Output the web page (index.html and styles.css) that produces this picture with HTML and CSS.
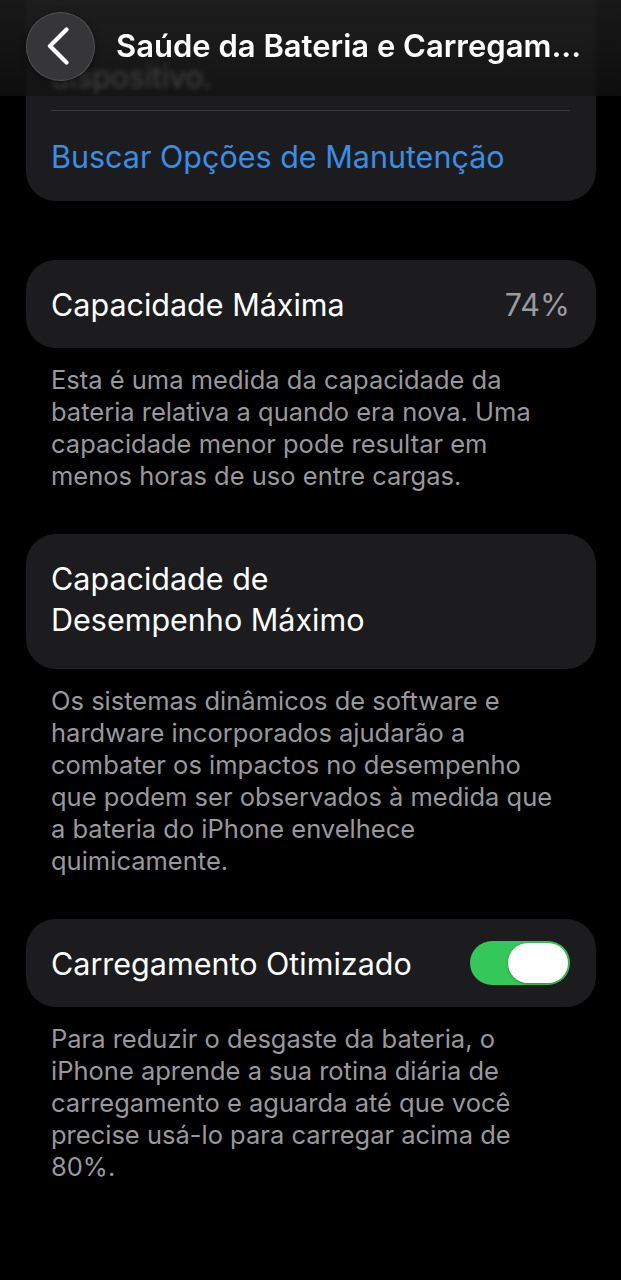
FILE: index.html
```html
<!DOCTYPE html>
<html lang="pt-BR">
<head>
<meta charset="utf-8">
<title>Saúde da Bateria e Carregamento</title>
<link rel="stylesheet" href="styles.css">
</head>
<body>
<div class="screen">
  <header class="navbar">
    <button class="back" aria-label="Voltar">
      <svg width="24" height="38" viewBox="0 0 24 38" fill="none">
        <path d="M20.5 2.5 L4 19 L20.5 35.5" stroke="#ffffff" stroke-width="4.2" stroke-linecap="round" stroke-linejoin="round"/>
      </svg>
    </button>
    <h1 class="title">Saúde da Bateria e Carregam...</h1>
  </header>

  <main class="content">
    <section class="card card-top">
      <p class="card-note">dispositivo.</p>
      <div class="link-row"><span class="link">Buscar Opções de Manutenção</span></div>
    </section>

    <section class="group group-first">
      <div class="card row">
        <span class="label">Capacidade Máxima</span>
        <span class="value">74%</span>
      </div>
      <p class="footer">Esta é uma medida da capacidade da<br>bateria relativa a quando era nova. Uma<br>capacidade menor pode resultar em<br>menos horas de uso entre cargas.</p>
    </section>

    <section class="group">
      <div class="card row row-tall">
        <span class="label">Capacidade de<br>Desempenho Máximo</span>
      </div>
      <p class="footer">Os sistemas dinâmicos de software e<br>hardware incorporados ajudarão a<br>combater os impactos no desempenho<br>que podem ser observados à medida que<br>a bateria do iPhone envelhece<br>quimicamente.</p>
    </section>

    <section class="group">
      <div class="card row">
        <span class="label">Carregamento Otimizado</span>
        <span class="toggle on"><span class="knob"></span></span>
      </div>
      <p class="footer">Para reduzir o desgaste da bateria, o<br>iPhone aprende a sua rotina diária de<br>carregamento e aguarda até que você<br>precise usá-lo para carregar acima de<br>80%.</p>
    </section>
  </main>
</div>
</body>
</html>
```

FILE: styles.css
```css
* { box-sizing: border-box; }

html, body {
  margin: 0;
  background: #000;
}

body {
  font-family: Inter, "Noto Sans", "Liberation Sans", sans-serif;
  color: #fff;
}

.screen {
  position: relative;
  width: 621px;
  height: 1280px;
  overflow: hidden;
  background: #000;
}

.navbar {
  position: absolute;
  top: 0;
  left: 0;
  right: 0;
  height: 96px;
  display: flex;
  align-items: center;
  gap: 21px;
  padding: 0 0 4px 26px;
  background: linear-gradient(180deg, rgba(30,30,30,0.8) 0%, rgba(18,18,18,0.76) 100%);
  backdrop-filter: blur(2.5px);
  -webkit-backdrop-filter: blur(2.5px);
  z-index: 2;
}

.back {
  flex: none;
  width: 69px;
  height: 69px;
  border-radius: 50%;
  border: 1px solid rgba(255,255,255,0.14);
  background: #363638;
  display: flex;
  align-items: center;
  justify-content: center;
  padding: 0 5px 0 0;
  box-shadow: 0 2px 6px rgba(0,0,0,0.5);
}

.title {
  margin: 0;
  font-size: 31px;
  line-height: 32px;
  font-weight: 600;
  letter-spacing: 0;
  white-space: nowrap;
  color: #fff;
}

.content {
  display: flex;
  flex-direction: column;
  padding: 0 25px 0 26px;
}

.card {
  background: #1c1c1e;
  border-radius: 30px;
}

.card-top {
  margin-top: -40px;
  padding: 0 26px 0 25px;
}

.card-note {
  margin: 0;
  padding: 102px 0 18px;
  font-size: 30px;
  line-height: 30px;
  color: #d0d0d4;
  border-bottom: 1px solid #3a3a3c;
}

.link-row {
  padding: 28px 0 26px;
}

.link {
  display: block;
  font-size: 30.5px;
  line-height: 36px;
  color: #3a8ee6;
}

.group {
  margin-top: 42px;
}

.group-first {
  margin-top: 59px;
}

.row {
  min-height: 88px;
  display: flex;
  align-items: center;
  justify-content: space-between;
  padding: 0 26px 0 25px;
}

.row-tall {
  padding-top: 24px;
  padding-bottom: 29px;
}

.label {
  font-size: 30.5px;
  line-height: 41px;
  color: #fff;
}

.value {
  font-size: 30.5px;
  line-height: 41px;
  color: #9a9a9f;
}

.footer {
  margin: 0;
  padding: 16px 25px 0 25px;
  font-size: 25.5px;
  line-height: 32px;
  color: #98989d;
}

.toggle {
  position: relative;
  width: 100px;
  height: 44px;
  border-radius: 22px;
  background: #34c759;
  flex: none;
}

.knob {
  position: absolute;
  top: 2px;
  right: 2px;
  width: 60px;
  height: 40px;
  border-radius: 20px;
  background: #fff;
  box-shadow: 0 1px 3px rgba(0,0,0,0.25);
}
```
